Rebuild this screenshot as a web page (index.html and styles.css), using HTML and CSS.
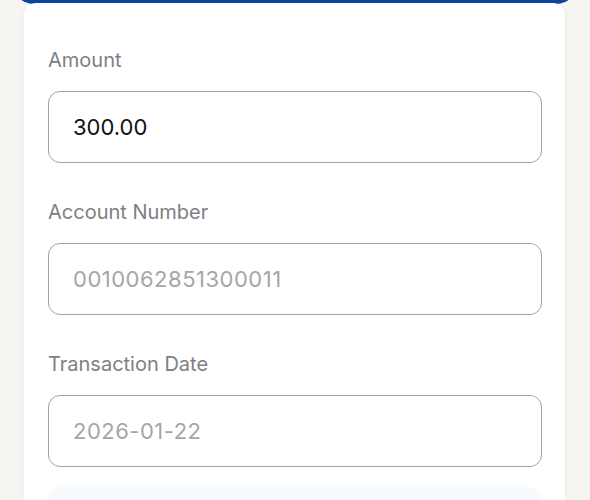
FILE: index.html
```html
<!DOCTYPE html>
<html>
<head>
<meta charset="utf-8">
<link rel="stylesheet" href="styles.css">
</head>
<body>
<div class="page">
  <div class="header"></div>
  <div class="card">
    <div class="field">
      <div class="label">Amount</div>
      <div class="input"><span class="value">300.00</span></div>
    </div>
    <div class="field">
      <div class="label">Account Number</div>
      <div class="input"><span class="placeholder">0010062851300011</span></div>
    </div>
    <div class="field">
      <div class="label">Transaction Date</div>
      <div class="input"><span class="placeholder">2026-01-22</span></div>
    </div>
    <div class="info"></div>
  </div>
</div>
</body>
</html>
```
FILE: styles.css
```css
html, body {
  margin: 0;
  padding: 0;
  background: #f6f5f2;
  width: 590px;
  height: 500px;
  overflow: hidden;
  font-family: Inter, "Liberation Sans", sans-serif;
}
.page {
  position: relative;
  height: 500px;
  overflow: hidden;
}
.header {
  position: absolute;
  left: 12px;
  right: 12px;
  top: -60px;
  height: 64px;
  background: #0a479e;
  border-radius: 0 0 22px 22px;
}
.card {
  position: relative;
  margin: 3px 25px 0 24px;
  background: #ffffff;
  border-radius: 12px 12px 0 0;
  box-shadow: 0 0 8px rgba(0, 0, 0, 0.04);
  padding: 46px 23px 0 24px;
  height: 451px;
}
.field {
  margin-bottom: 38px;
}
.label {
  font-size: 20px;
  line-height: 22px;
  color: #808084;
  margin-bottom: 20px;
}
.input {
  height: 70px;
  border: 1.5px solid #a4a4a6;
  border-radius: 12px;
  display: flex;
  align-items: center;
  padding-left: 24px;
  font-size: 22px;
}
.value {
  color: #111111;
}
.placeholder {
  color: #a6a6a8;
  letter-spacing: 0.5px;
}
.info {
  margin-top: -18px;
  height: 60px;
  background: #f8fbfd;
  border-radius: 10px;
}
```
